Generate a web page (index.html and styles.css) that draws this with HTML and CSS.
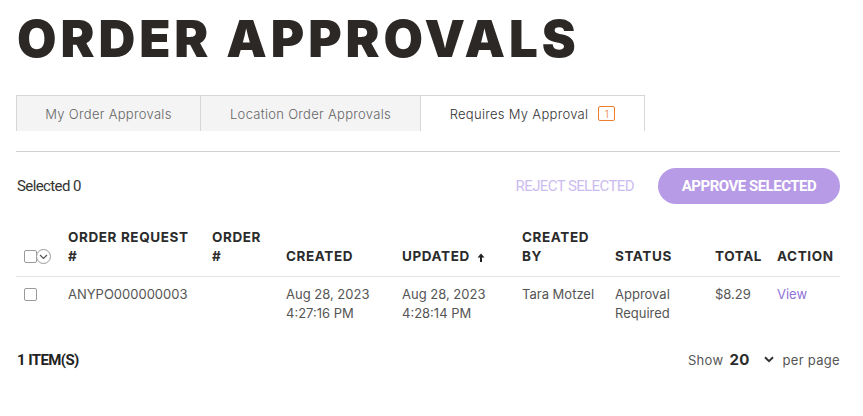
FILE: index.html
```html
<!DOCTYPE html>
<html>
<head>
<meta charset="utf-8">
<link rel="stylesheet" href="styles.css">
</head>
<body>
<div class="page">
  <h1 class="title">ORDER APPROVALS</h1>
  <div class="tabs">
    <div class="tab tab-1">My Order Approvals</div>
    <div class="tab tab-2">Location Order Approvals</div>
    <div class="tab tab-3 active">Requires My Approval <span class="badge">1</span></div>
  </div>
  <div class="divider"></div>
  <div class="actions">
    <div class="selected">Selected 0</div>
    <div class="action-buttons">
      <span class="reject">REJECT SELECTED</span>
      <button class="approve">APPROVE SELECTED</button>
    </div>
  </div>
  <table class="grid">
    <thead>
      <tr>
        <th class="c-check"><span class="hdr-check"><span class="box"></span><span class="circle"><svg width="9" height="6" viewBox="0 0 9 6"><path d="M1 1l3.5 3.5L8 1" fill="none" stroke="#555" stroke-width="1.2"/></svg></span></span></th>
        <th class="c-req">ORDER REQUEST<br>#</th>
        <th class="c-ord">ORDER<br>#</th>
        <th class="c-created">CREATED</th>
        <th class="c-updated">UPDATED <svg class="arrow" width="8" height="9" viewBox="0 0 8 9"><path d="M4 0.5L7.5 4.5H5V9H3V4.5H0.5Z" fill="#222"/></svg></th>
        <th class="c-by">CREATED<br>BY</th>
        <th class="c-status">STATUS</th>
        <th class="c-total">TOTAL</th>
        <th class="c-action">ACTION</th>
      </tr>
    </thead>
    <tbody>
      <tr>
        <td class="c-check"><span class="box"></span></td>
        <td>ANYPO000000003</td>
        <td></td>
        <td>Aug 28, 2023<br>4:27:16 PM</td>
        <td>Aug 28, 2023<br>4:28:14 PM</td>
        <td>Tara Motzel</td>
        <td>Approval<br>Required</td>
        <td>$8.29</td>
        <td><a class="view">View</a></td>
      </tr>
    </tbody>
  </table>
  <div class="footer">
    <div class="count">1 ITEM(S)</div>
    <div class="perpage">Show <b>20</b> <svg class="chev" width="10" height="7" viewBox="0 0 10 7"><path d="M1 1.2l4 4 4-4" fill="none" stroke="#333" stroke-width="2"/></svg> per page</div>
  </div>
</div>
</body>
</html>
```
FILE: styles.css
```css
* { box-sizing: border-box; }
body {
  margin: 0;
  background: #fff;
  font-family: "Inter", "DejaVu Sans", sans-serif;
  color: #444;
}
.page {
  padding: 0 23px 0 16px;
}
.title {
  margin: 0;
  padding-top: 9px;
  height: 95px;
  font-family: "Inter", sans-serif;
  font-weight: 900;
  font-size: 51px;
  line-height: 60px;
  letter-spacing: 3.9px;
  color: #2b2826;
  padding-left: 1px;
}
.tabs {
  display: flex;
  height: 36px;
}
.tab {
  display: flex;
  align-items: center;
  justify-content: center;
  font-size: 13px;
  font-weight: 300;
  letter-spacing: 0.3px;
  color: #666;
  background: #f4f4f4;
  border: 1px solid #d6d6d6;
  border-bottom: none;
}
.tab-1 { width: 185px; }
.tab-2 { width: 220px; border-left: none; }
.tab-3 { width: 224px; border-left: none; background: #fff; color: #333; }
.badge {
  display: inline-flex;
  align-items: center;
  justify-content: center;
  width: 17px;
  height: 15px;
  margin-left: 10px;
  border: 1px solid #ef7d2e;
  border-radius: 2px;
  color: #ef7d2e;
  font-size: 10px;
}
.divider {
  margin-top: 20px;
  height: 1px;
  background: #d0d0d0;
}
.actions {
  display: flex;
  justify-content: space-between;
  align-items: center;
  margin-top: 16px;
  height: 36px;
}
.selected {
  font-family: "Roboto", sans-serif;
  font-size: 15px;
  letter-spacing: -0.6px;
  color: #333;
  padding-left: 1px;
}
.action-buttons {
  display: flex;
  align-items: center;
  gap: 24px;
}
.reject {
  font-family: "Roboto", sans-serif;
  font-size: 15px;
  letter-spacing: -0.6px;
  color: #cbbcef;
}
.approve {
  width: 182px;
  height: 36px;
  border: none;
  border-radius: 18px;
  background: #b79be6;
  color: #fff;
  font-family: "Roboto", sans-serif;
  font-weight: 700;
  font-size: 15px;
  letter-spacing: -0.5px;
}
.grid {
  width: 100%;
  margin-top: 24px;
  border-collapse: collapse;
  font-size: 13px;
}
.grid th {
  text-align: left;
  vertical-align: bottom;
  font-weight: 700;
  font-size: 13.5px;
  letter-spacing: 0.6px;
  color: #2b2b2b;
  line-height: 19px;
  padding: 0 0 10px 0;
  border-bottom: 1px solid #e2e2e2;
  white-space: nowrap;
}
.grid td {
  text-align: left;
  vertical-align: top;
  font-weight: 400;
  color: #555;
  line-height: 19px;
  padding: 8px 0 0 0;
}
.c-check { width: 52px; padding-left: 8px !important; }
.c-req { width: 144px; }
.c-ord { width: 74px; }
.c-created { width: 116px; }
.c-updated { width: 120px; }
.c-by { width: 93px; }
.c-status { width: 100px; }
.c-total { width: 62px; }
.hdr-check {
  display: inline-flex;
  align-items: center;
  position: relative;
  top: 2px;
}
.box {
  display: inline-block;
  width: 13px;
  height: 13px;
  border: 1px solid #9a9a9a;
  border-radius: 2px;
  background: #fff;
}
.grid td .box { margin-top: 3px; }
.circle {
  display: inline-flex;
  align-items: center;
  justify-content: center;
  width: 15px;
  height: 15px;
  border: 1px solid #999;
  border-radius: 50%;
  margin-left: -1px;
  background: #fff;
}
.arrow { margin-left: 3px; vertical-align: -1px; }
.view { color: #8e72d8; }
.footer {
  display: flex;
  justify-content: space-between;
  align-items: center;
  margin-top: 27px;
}
.count {
  font-family: "Roboto", sans-serif;
  font-weight: 700;
  font-size: 15px;
  letter-spacing: -0.6px;
  color: #222;
  padding-left: 1px;
}
.perpage {
  font-size: 13px;
  letter-spacing: 0.3px;
  color: #555;
  display: flex;
  align-items: center;
}
.perpage b {
  font-size: 15px;
  color: #2b2b2b;
  margin: 0 14px 0 6px;
}
.chev { margin-right: 9px; }
```
